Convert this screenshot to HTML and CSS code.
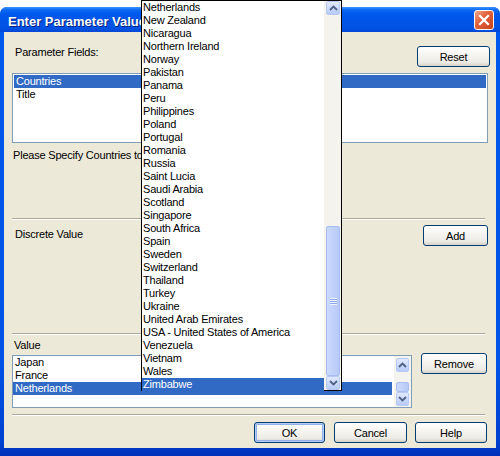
FILE: index.html
```html
<!DOCTYPE html>
<html>
<head>
<meta charset="utf-8">
<link rel="stylesheet" href="styles.css">
</head>
<body>
<div class="window">
  <div class="titlebar">
    <span class="title">Enter Parameter Values</span>
    <span class="close"><svg width="12" height="12" viewBox="0 0 12 12"><path d="M2 2 L10 10 M10 2 L2 10" stroke="#fff" stroke-width="2.2" stroke-linecap="square"/></svg></span>
  </div>
  <div class="client">
    <div class="sec sec1">
      <div class="row row-fields">
        <span class="label label-fields">Parameter Fields:</span>
        <button class="btn btn-reset">Reset</button>
      </div>
      <div class="listbox list-fields">
        <div class="item sel">Countries</div>
        <div class="item">Title</div>
      </div>
      <div class="prompt">Please Specify Countries to display</div>
    </div>
    <div class="sep"></div>
    <div class="sec sec2">
      <div class="row row-discrete">
        <span class="label label-discrete">Discrete Value</span>
        <button class="btn btn-add">Add</button>
      </div>
    </div>
    <div class="sep"></div>
    <div class="sec sec3">
      <div class="value-col">
        <span class="label label-value">Value</span>
        <div class="listbox list-values">
          <div class="items">
            <div class="item">Japan</div>
            <div class="item">France</div>
            <div class="item sel">Netherlands</div>
          </div>
          <div class="vscroll vs-small">
            <div class="sbtn"><svg width="9" height="6" viewBox="0 0 9 6"><path d="M1 5 L4.5 1.5 L8 5" fill="none" stroke="#4D6185" stroke-width="1.8"/></svg></div>
            <div class="track"><div class="thumb thumb-small"></div></div>
            <div class="sbtn"><svg width="9" height="6" viewBox="0 0 9 6"><path d="M1 1 L4.5 4.5 L8 1" fill="none" stroke="#4D6185" stroke-width="1.8"/></svg></div>
          </div>
        </div>
      </div>
      <button class="btn btn-remove">Remove</button>
    </div>
    <div class="sep"></div>
    <div class="footer">
      <button class="btn btn-default btn-ok">OK</button>
      <button class="btn btn-cancel">Cancel</button>
      <button class="btn btn-help">Help</button>
    </div>
  </div>
</div>

<div class="dropdown">
  <div class="dd-items">
    <div class="item">Netherlands</div>
    <div class="item">New Zealand</div>
    <div class="item">Nicaragua</div>
    <div class="item">Northern Ireland</div>
    <div class="item">Norway</div>
    <div class="item">Pakistan</div>
    <div class="item">Panama</div>
    <div class="item">Peru</div>
    <div class="item">Philippines</div>
    <div class="item">Poland</div>
    <div class="item">Portugal</div>
    <div class="item">Romania</div>
    <div class="item">Russia</div>
    <div class="item">Saint Lucia</div>
    <div class="item">Saudi Arabia</div>
    <div class="item">Scotland</div>
    <div class="item">Singapore</div>
    <div class="item">South Africa</div>
    <div class="item">Spain</div>
    <div class="item">Sweden</div>
    <div class="item">Switzerland</div>
    <div class="item">Thailand</div>
    <div class="item">Turkey</div>
    <div class="item">Ukraine</div>
    <div class="item">United Arab Emirates</div>
    <div class="item">USA - United States of America</div>
    <div class="item">Venezuela</div>
    <div class="item">Vietnam</div>
    <div class="item">Wales</div>
    <div class="item sel">Zimbabwe</div>
  </div>
  <div class="vscroll vs-dd">
    <div class="sbtn"><svg width="9" height="6" viewBox="0 0 9 6"><path d="M1 5 L4.5 1.5 L8 5" fill="none" stroke="#4D6185" stroke-width="1.8"/></svg></div>
    <div class="track"><div class="thumb thumb-dd"><div class="grip"></div></div></div>
    <div class="sbtn"><svg width="9" height="6" viewBox="0 0 9 6"><path d="M1 1 L4.5 4.5 L8 1" fill="none" stroke="#4D6185" stroke-width="1.8"/></svg></div>
  </div>
</div>
</body>
</html>
```

FILE: styles.css
```css
html, body {
  margin: 0;
  padding: 0;
  background: #ffffff;
}
body {
  position: relative;
  width: 500px;
  height: 456px;
  overflow: hidden;
  font-family: "Liberation Sans", Arial, sans-serif;
  font-size: 11px;
  letter-spacing: -0.2px;
  color: #000;
}
.window {
  margin-top: 7px;
  height: 449px;
  width: 500px;
  box-sizing: border-box;
  background: linear-gradient(to bottom, #0058EE 0, #0053E6 80%, #0040D0 97%, #0030B8 100%);
  border-radius: 7px 7px 0 0;
  display: flex;
  flex-direction: column;
}
.titlebar {
  height: 25px;
  flex: none;
  display: flex;
  justify-content: space-between;
  align-items: flex-start;
  border-radius: 7px 7px 0 0;
  background: linear-gradient(to bottom, #3D95FF 0, #0A66F0 3px, #0058EE 7px, #0055E6 55%, #0052E2 85%, #0048D6 100%);
}
.title {
  margin: 7px 0 0 8px;
  width: 133px;
  overflow: hidden;
  line-height: 16px;
  font-family: "Liberation Sans", Arial, sans-serif;
  font-weight: bold;
  font-size: 13px;
  letter-spacing: 0;
  color: #fff;
  text-shadow: 1px 1px 0 #0A1F80;
  white-space: nowrap;
}
.close {
  margin: 3px 6px 0 0;
  width: 20px;
  height: 20px;
  box-sizing: border-box;
  border: 1px solid #fff;
  border-radius: 3px;
  background: linear-gradient(135deg, #F0A68C 0, #E2643F 40%, #C8411B 100%);
  display: flex;
  align-items: center;
  justify-content: center;
}
.close svg { display: block; }

.client {
  flex: 1;
  margin: 0 4px 8px 4px;
  background: #ECE9D8;
  display: flex;
  flex-direction: column;
}
.sec { flex: none; box-sizing: border-box; }
.sec1 { height: 186px; }
.sec2 { height: 113px; }
.sec3 {
  height: 79px;
  display: flex;
  justify-content: space-between;
  align-items: flex-start;
  padding: 0 9px 0 8px;
}
.row {
  display: flex;
  justify-content: space-between;
  align-items: flex-start;
}
.row-fields { padding: 14px 6px 0 11px; }
.row-discrete { padding: 5px 8px 0 11px; }
.label {
  line-height: 14px;
  white-space: nowrap;
}
.label-fields { margin-top: -1px; }
.label-discrete { margin-top: 2px; }
.label-value { display: block; margin: 3px 0 0 2px; }
.prompt {
  margin: 5px 0 0 9px;
  width: 128px;
  overflow: hidden;
  line-height: 14px;
  white-space: nowrap;
}
.sep {
  flex: none;
  height: 0;
  border-top: 1px solid #ACA899;
  border-bottom: 1px solid #FFFFFF;
  margin: 0 11px 0 8px;
}

.btn {
  font-family: "Liberation Sans", Arial, sans-serif;
  font-size: 11px;
  letter-spacing: -0.2px;
  color: #000;
  height: 21px;
  padding: 0;
  box-sizing: border-box;
  border: 1px solid #003C74;
  border-radius: 3px;
  background: linear-gradient(to bottom, #FFFFFF 0, #F6F5F1 40%, #ECEBE5 80%, #D8D3C8 100%);
  flex: none;
}
.btn-reset { width: 73px; }
.btn-add { width: 65px; }
.btn-remove { width: 66px; margin-top: 18px; }
.btn-ok { width: 71px; }
.btn-cancel { width: 73px; }
.btn-help { width: 72px; }
.btn-default {
  box-shadow: inset 0 0 0 1px #B8CDF4, inset 0 0 0 2px #8FB0EA;
}
.footer {
  display: flex;
  justify-content: flex-end;
  gap: 9px;
  padding: 6px 9px 0 0;
}
.btn-help { margin-left: -1px; }

.listbox {
  box-sizing: border-box;
  border: 1px solid #7F9DB9;
  background: #FFFFFF;
}
.list-fields {
  margin: 6px 8px 0 8px;
  height: 70px;
  padding: 1px;
}
.item {
  height: 13px;
  line-height: 13px;
  padding-left: 2px;
  white-space: nowrap;
}
.item.sel {
  background: #316AC5;
  color: #fff;
}
.list-values {
  margin-top: 3px;
  width: 400px;
  height: 53px;
  display: flex;
}
.items { flex: 1; padding-right: 2px; }

.vscroll {
  flex: none;
  display: flex;
  flex-direction: column;
  background: #F4F3EE;
  box-sizing: border-box;
}
.sbtn {
  flex: none;
  box-sizing: border-box;
  border: 1px solid #B7CAF5;
  border-radius: 2px;
  background: linear-gradient(to bottom, #E1EAFE 0, #C7D6FA 60%, #B8CBF6 100%);
  display: flex;
  align-items: center;
  justify-content: center;
}
.sbtn svg { display: block; }
.track {
  flex: 1;
  display: flex;
  flex-direction: column;
  justify-content: flex-end;
}
.thumb {
  box-sizing: border-box;
  border: 1px solid #A8BEF2;
  border-radius: 2px;
  background: linear-gradient(to right, #CAD8FC 0, #C1D2FA 50%, #B7CAF6 100%);
  display: flex;
  align-items: center;
  justify-content: center;
}
.vs-small {
  width: 17px;
  padding: 2px 2px 1px 2px;
}
.vs-small .sbtn { height: 14px; }
.thumb-small { height: 10px; }

.dropdown {
  position: absolute;
  left: 141px;
  top: 0;
  width: 201px;
  height: 391px;
  box-sizing: border-box;
  border: 1px solid #000;
  background: #fff;
  display: flex;
}
.dd-items {
  flex: 1;
  padding-left: 0;
}
.dd-items .item { padding-left: 1px; }
.vs-dd {
  width: 17px;
  padding: 0 1px 0 2px;
}
.vs-dd .sbtn { height: 14px; }
.thumb-dd { height: 150px; }
.grip {
  width: 7px;
  height: 7px;
  background: repeating-linear-gradient(to bottom, #EEF3FE 0, #EEF3FE 1px, #8CAAEB 1px, #8CAAEB 2px);
}
```
